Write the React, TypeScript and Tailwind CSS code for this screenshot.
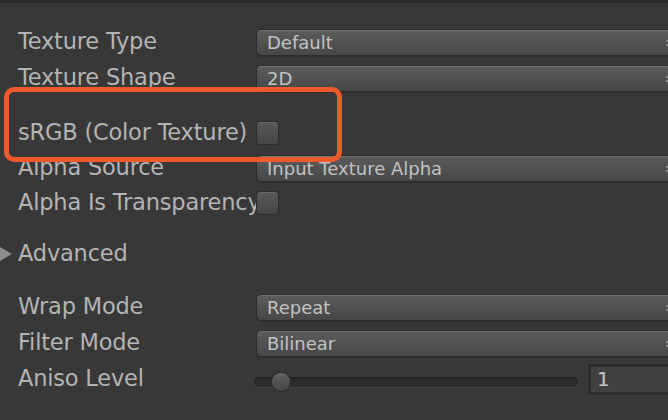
import React from "react";

const font = { fontFamily: '"DejaVu Sans", "Liberation Sans", sans-serif' };

function Dropdown({ value }: { value: string }) {
  return (
    <div className="relative flex h-[27px] w-[426px] shrink-0 items-center rounded-[5px] border border-[#2c2c2c] bg-gradient-to-b from-[#5c5c5c] to-[#474747] pl-[10px] text-[18px] text-[#c2c2c2] shadow-[inset_0_1px_0_#717171,0_1px_0_#2e2e2e]">
      {value}
      <div className="absolute left-[409px] top-[10px] flex flex-col gap-[2px]">
        <span className="h-[2px] w-[2px] bg-[#8a8a8a]" />
        <span className="h-[2px] w-[2px] bg-[#8a8a8a]" />
      </div>
    </div>
  );
}

function Checkbox() {
  return (
    <div className="h-[24px] w-[23px] shrink-0 rounded-[4px] border border-[#2c2c2c] bg-gradient-to-b from-[#585858] to-[#454545] shadow-[inset_0_1px_0_#6a6a6a]" />
  );
}

function Row({
  label,
  children,
  className = "",
}: {
  label: string;
  children?: React.ReactNode;
  className?: string;
}) {
  return (
    <div className={"flex h-[36px] items-center " + className}>
      <div className="w-[256px] shrink-0 whitespace-nowrap pl-[18px] text-[22.5px] tracking-[-0.2px] text-[#b4b4b4]">
        {label}
      </div>
      {children}
    </div>
  );
}

export default function App() {
  return (
    <div
      className="relative h-[420px] w-[668px] overflow-hidden bg-[#383838]"
      style={font}
    >
      <div className="h-[3px] w-full bg-[#2a2a2a]" />

      <div className="flex flex-col pt-[21px]">
        <Row label="Texture Type">
          <Dropdown value="Default" />
        </Row>
        <Row label="Texture Shape">
          <Dropdown value="2D" />
        </Row>
        <Row label="sRGB (Color Texture)" className="mt-[19px]">
          <Checkbox />
        </Row>
        <Row label="Alpha Source" className="-mt-[1px]">
          <Dropdown value="Input Texture Alpha" />
        </Row>
        <Row label="Alpha Is Transparency" className="-mt-[1px]">
          <Checkbox />
        </Row>

        {/* Advanced foldout */}
        <div className="mt-[15px] flex h-[36px] items-center">
          <div className="h-0 w-0 border-y-[7px] border-l-[12px] border-y-transparent border-l-[#8c8c8c]" />
          <span className="pl-[6px] text-[22.5px] tracking-[-0.2px] text-[#b4b4b4]">Advanced</span>
        </div>

        <Row label="Wrap Mode" className="mt-[17px]">
          <Dropdown value="Repeat" />
        </Row>
        <Row label="Filter Mode">
          <Dropdown value="Bilinear" />
        </Row>
        <Row label="Aniso Level">
          <div className="flex flex-1 items-center">
            <div className="relative -ml-[2px] mt-[6px] h-[10px] w-[324px] shrink-0 rounded-full bg-[#2c2c2c] shadow-[inset_0_1px_2px_#1e1e1e,0_1px_0_#424242]">
              <div className="absolute left-[17px] top-[-5px] h-[20px] w-[20px] rounded-full border border-[#2a2a2a] bg-gradient-to-b from-[#606060] to-[#474747] shadow-[inset_0_1px_0_#707070]" />
            </div>
            <div className="ml-[10px] flex h-[31px] w-[100px] shrink-0 items-center border-[3px] border-[#2b2b2b] bg-[#414141] pl-[6px] text-[20px] text-[#c8c8c8]">
              1
            </div>
          </div>
        </Row>
      </div>

      {/* highlight annotation */}
      <div className="absolute left-[4px] top-[87px] h-[75px] w-[338px] rounded-[10px] border-[5px] border-[#ef5a2c]" />
    </div>
  );
}
